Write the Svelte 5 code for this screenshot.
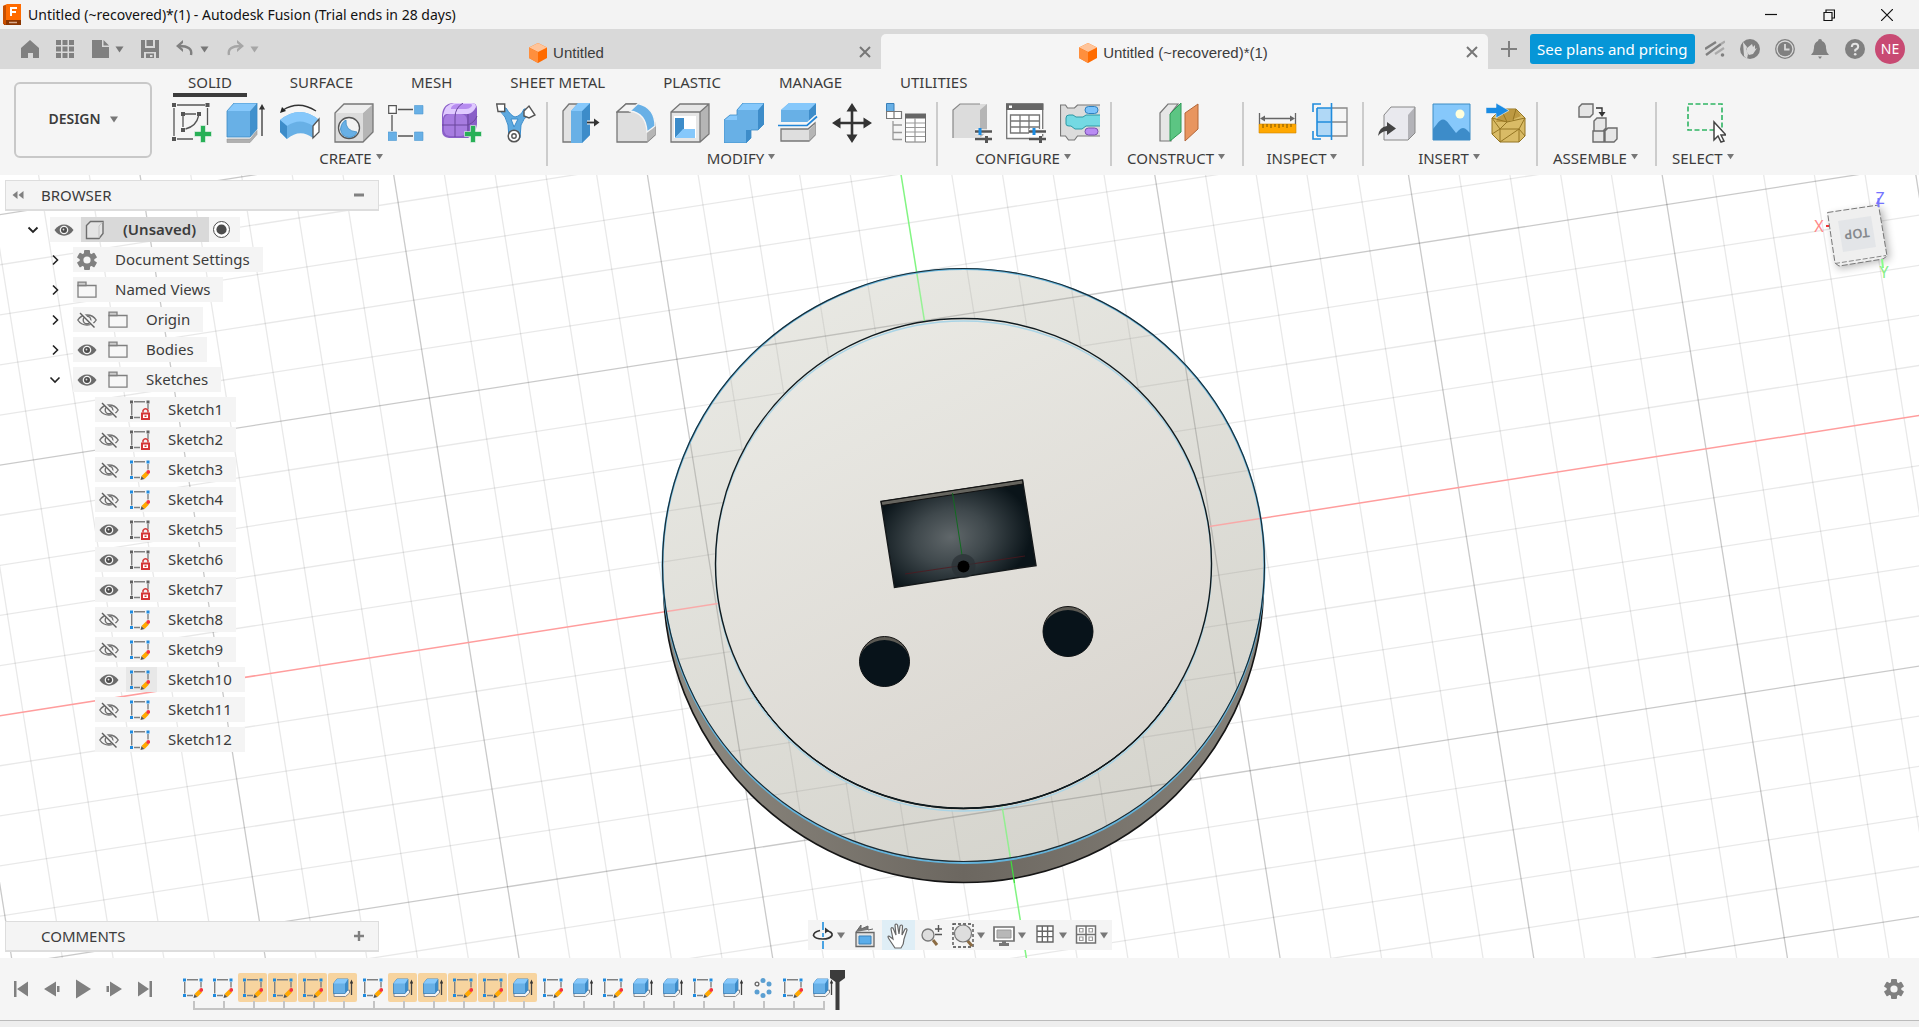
<script>
  const tabs = ['SOLID', 'SURFACE', 'MESH', 'SHEET METAL', 'PLASTIC', 'MANAGE', 'UTILITIES'];

  const groups = [
    { label: 'CREATE', tools: ['sketch', 'extrude', 'revolve', 'hole', 'pattern', 'form', 'pipe'] },
    { label: 'MODIFY', tools: ['presspull', 'fillet', 'shell', 'combine', 'split', 'move', 'parameters'] },
    { label: 'CONFIGURE', tools: ['configure', 'configtable', 'rules'] },
    { label: 'CONSTRUCT', tools: ['plane'] },
    { label: 'INSPECT', tools: ['measure', 'section'] },
    { label: 'INSERT', tools: ['derive', 'decal', 'mesh'] },
    { label: 'ASSEMBLE', tools: ['joint'] },
    { label: 'SELECT', tools: ['select'] }
  ];

  const folders = [
    { name: 'Document Settings', icon: 'gear' },
    { name: 'Named Views', icon: 'folder' },
    { name: 'Origin', icon: 'folder', eye: 'off' },
    { name: 'Bodies', icon: 'folder', eye: 'on' },
    { name: 'Sketches', icon: 'folder', eye: 'on', open: true }
  ];

  const locked = [1, 2, 5, 6, 7];
  const shown = [5, 6, 7, 10];
  const sketches = Array.from({ length: 12 }, (_, i) => ({
    name: `Sketch${i + 1}`,
    icon: locked.includes(i + 1) ? 'sketchlock' : 'sketchedit',
    eye: shown.includes(i + 1) ? 'on' : 'off',
    current: i + 1 === 10
  }));

  const features = [...'ssssseseesseseseesepse'].map((kind, i) => ({
    kind,
    marked: (i > 1 && i < 6) || (i > 6 && i < 12)
  }));
  const featureNames = { s: 'Sketch', e: 'Extrude', p: 'Circular pattern' };

  const playback = ['first', 'back', 'play', 'forward', 'last'];

  const navTools = [
    { icon: 'orbit', menu: true },
    { icon: 'look' },
    { icon: 'pan', active: true },
    { icon: 'zoom' },
    { icon: 'fit', menu: true },
    { icon: 'display', menu: true },
    { icon: 'grid', menu: true },
    { icon: 'views', menu: true }
  ];

  const gridSteps = Array.from({ length: 61 }, (_, i) => i - 30).filter((n) => n !== 0);
</script>

{#snippet caret()}
  <svg class="caret" viewBox="0 0 8 7" aria-hidden="true"><path d="M0 0.5h8L4 6.5z" fill="currentColor" /></svg>
{/snippet}

{#snippet cross()}
  <svg class="i12" viewBox="0 0 12 12" aria-hidden="true"><path d="M1 1l10 10M11 1L1 11" stroke="currentColor" stroke-width="2" fill="none" /></svg>
{/snippet}

{#snippet cube()}
  <svg class="cube" viewBox="0 0 18 20" aria-hidden="true">
    <path d="M9 0l9 4.500v10.500L9 20 0 15V4.500z" fill="#ff6b00" />
    <path d="M9 0l9 4.500L9 9 0 4.500z" fill="#ffc49a" />
    <path d="M0 4.500L9 9v11L0 15z" fill="#ff8f3d" />
  </svg>
{/snippet}

{#snippet plus()}
  <path d="M28.500 22.500h5v6h6v5h-6v6h-5v-6h-6v-5h6z" fill="#28b057" stroke="#f5f5f5" stroke-width=".6" />
{/snippet}

{#snippet gear()}
  <g fill="#808080">
    {#each [0, 60, 120] as angle}
      <rect x="7" y="0" width="6" height="20" rx="1" transform="rotate({angle} 10 10)" />
    {/each}
    <circle cx="10" cy="10" r="7.400" />
  </g>
  <circle cx="10" cy="10" r="3.600" fill="#f5f5f5" />
{/snippet}

{#snippet eye(state)}
  <svg class="i20" viewBox="0 0 20 20" aria-hidden="true">
    {#if state === 'on'}
      <path d="M0.500 10C5 2.500 15 2.500 19.500 10 15 17.500 5 17.500 0.500 10z" fill="#6b6b6b" />
      <circle cx="10" cy="10" r="4.300" fill="#f5f5f5" />
      <circle cx="10" cy="10" r="3" fill="#4c4c4c" />
      <circle cx="9.500" cy="9.500" r="0.900" fill="#ddd" />
    {:else}
      <path d="M0.800 10C5 3.300 15 3.300 19.200 10 15 16.700 5 16.700 0.800 10z" fill="none" stroke="#707070" stroke-width="1.400" />
      <circle cx="10" cy="10" r="3.800" fill="none" stroke="#707070" stroke-width="1.400" />
      <path d="M4 2.500l14 14.500" stroke="#f5f5f5" stroke-width="3" />
      <path d="M3 3l14.500 14.500" stroke="#606060" stroke-width="1.400" />
    {/if}
  </svg>
{/snippet}

{#snippet small(name)}
  <svg class="i20" viewBox="0 0 20 20" aria-hidden="true">
    {#if name === 'gear'}
      {@render gear()}
    {:else if name === 'folder'}
      <path d="M1 5.500h18v11.700H1z" fill="#f7f7f7" stroke="#808080" stroke-width="1.300" />
      <path d="M1 2.200h8v3.300H1z" fill="#ccc" stroke="#808080" stroke-width="1.300" />
    {:else if name === 'body'}
      <path d="M5.500 1.500H18v12l-4 5H1.500v-13z" fill="#e4e4e4" stroke="#6e6e6e" stroke-width="1.400" />
      <path d="M14 6l3.500-4M14 6v12" stroke="#c4c4c4" fill="none" />
    {:else if name === 'extrude'}
      <path d="M1 15v3.500h11.500l4-3.500v-3z" fill="#f3f3f3" stroke="#8a8a8a" />
      <path d="M0.500 5.500L4 1h11v10.500L12 15.500H0.500z" fill="#68b0e6" stroke="#387fb8" stroke-width=".8" />
      <path d="M12 5.500L15 1v10.500l-3 4z" fill="#3d8cc9" />
      <path d="M0.500 5.500L4 1h11l-3 4.500z" fill="#86c8fb" />
      <path d="M18.500 17V4" stroke="#444" stroke-width="1.300" />
      <path d="M16.800 5.500L18.500 1.500l1.700 4z" fill="#333" />
    {:else if name === 'circpattern'}
      <g fill="#5b9fd2">
        <circle cx="10" cy="2.500" r="2.500" /><circle cx="16" cy="6" r="2.500" /><circle cx="16" cy="14" r="2.500" />
        <circle cx="10" cy="17.500" r="2.500" /><circle cx="4" cy="14" r="2.500" />
      </g>
      <circle cx="4" cy="6" r="1.900" fill="#f5f5f5" stroke="#666" stroke-width="1.300" />
    {:else}
      <path d="M4 1.700h11M1.700 4v11.500M18 4v5.500M4 17.500h6" stroke="#808080" stroke-width="1.400" fill="none" />
      <g fill={name === 'sketchlock' ? '#606060' : '#1e8be0'}>
        <path d="M0 0.500h3v3H0zM16.500 0.500h3v3h-3zM0 16h3v3H0z" />
      </g>
      {#if name === 'sketchlock'}
        <path d="M11 12.500h9v7.500h-9z" fill="#d43434" />
        <path d="M13 12.500v-2q2.500-3.500 5 0v2" fill="none" stroke="#d43434" stroke-width="1.500" />
        <path d="M13 14.500h5v3.500h-5z" fill="#fff" /><path d="M14.500 15.500h2v1.500h-2z" fill="#d43434" />
      {:else}
        <path d="M10.500 20l1-4 3 3z" fill="#555" />
        <path d="M11.500 16l4.500-4.500 3 3-4.500 4.500z" fill="#ffa800" />
        <circle cx="18.200" cy="12" r="1.900" fill="#f5353f" />
      {/if}
    {/if}
  </svg>
{/snippet}

{#snippet toolIcon(name)}
  <svg class="i40" viewBox="0 0 40 40" aria-hidden="true">
    {#if name === 'sketch'}
      <path d="M5 2h28M2 5v28M35.500 5v17M5 36h16" fill="none" stroke="#555" stroke-width="1.300" />
      <path d="M13 11h11M11 13v11M26.500 13q-2 10-13 13" fill="none" stroke="#555" stroke-width="1.300" />
      <path d="M0 0h4v4H0zM33.500 0h4v4h-4zM0 34h4v4H0zM9 9h4v4H9zM25 9h4v4h-4zM9 25h4v4H9z" fill="#555" />
      {@render plus()}
    {:else if name === 'extrude'}
      <path d="M1 36v3.500h23l7-8v-4l-7 8.500z" fill="#b0b0b0" stroke="#999" stroke-width=".6" />
      <path d="M1 8h23v26H1z" fill="#68b0e6" />
      <path d="M1 8l7-8h23l-7 8z" fill="#86c8fb" />
      <path d="M24 8l7-8v26l-7 8z" fill="#4191cd" />
      <path d="M1 8l7-8h23v26l-7 8H1z" fill="none" stroke="#3d8cc4" stroke-width=".8" />
      <path d="M36 33V4" stroke="#333" stroke-width="1.300" /><path d="M33 6.500l3-5.500 3 5.500z" fill="#333" />
    {:else if name === 'revolve'}
      <path d="M0 17Q20 1 39 17l-6 18q-13-10-26 1L0 29z" fill="#68b0e6" />
      <path d="M0 17Q20 1 39 17l-6 6Q20 14 7 23z" fill="#86c8fb" />
      <path d="M0 17l7 6v13l-7-7z" fill="#3d8cc9" />
      <path d="M33 23l6-7v13l-6 6z" fill="#fff" stroke="#555" stroke-width="1.300" />
      <path d="M3 7q16-10 33 1" fill="none" stroke="#333" stroke-width="1.300" /><path d="M0 10l2-6 4 4z" fill="#222" />
    {:else if name === 'hole'}
      <path d="M1 10L10 1h29v28L29 39H1z" fill="#dcdcdc" />
      <path d="M29 10L39 1v28L29 39z" fill="#b5b5b5" /><path d="M1 10l9-9h29l-10 9z" fill="#eee" />
      <path d="M1 10L10 1h29v28L29 39H1z" fill="none" stroke="#777" stroke-width="1.300" />
      <circle cx="15" cy="25" r="10.500" fill="#f2f2f2" stroke="#555" stroke-width="1.300" />
      <path d="M12 17q-1 11 11 12-2 5-8 5.500-8-1-8.500-8.500 1-7 5.500-9z" fill="#68b0e6" stroke="#3a8ac5" stroke-width=".8" />
    {:else if name === 'pattern'}
      <path d="M10 6.500h15M4 12v16M10 33h15" stroke="#555" stroke-width="1.300" fill="none" />
      <path d="M0.700 2.700h7.600v7.600H0.700z" fill="#fff" stroke="#555" stroke-width="1.200" />
      <path d="M26.500 2.500h8.500v8.500h-8.500zM0 29h8.500v8.500H0zM26.500 29h8.500v8.500h-8.500z" fill="#68b0e6" stroke="#4d98d0" stroke-width=".6" />
    {:else if name === 'form'}
      <path d="M0 12Q1 0 12 0h18q5 0 5 6v15q-1 10-9 14H7q-7-1-7-7z" fill="#8a5fc8" />
      <path d="M1 12Q3 1 12 0h18q4 0 4 4-3 6-8 7H5q-3 0-4 4z" fill="#e0caff" />
      <path d="M9 5q2-4 6-4h14q2 1 0 3-2 2-5 2H9z" fill="#b78df0" />
      <rect x="2" y="11" width="23" height="22" rx="6" fill="#a77ce0" />
      <path d="M13 34V14q0-9 8-14M0 22h26q7-3 9-9M26 11v22" fill="none" stroke="#6a479c" />
      {@render plus()}
    {:else if name === 'pipe'}
      <path d="M4 5h6q5 8 9 9 6-1 9-8h5v5q-6 5-8 11l-1 13H13l-1-13Q10 13 4 8z" fill="#5ea9df" stroke="#3a8ccb" />
      <path d="M15 16h7l-4 8z" fill="#f5f5f5" stroke="#3a8ccb" />
      <path d="M0.700 1h8v7.500H2z" fill="#fff" stroke="#555" stroke-width="1.400" />
      <path d="M28 8l5-5 6 9-6 3-5-2z" fill="#fff" stroke="#555" stroke-width="1.400" />
      <circle cx="18" cy="33" r="5.800" fill="#fff" stroke="#555" stroke-width="1.500" /><circle cx="18" cy="33" r="2.200" fill="#fff" stroke="#555" stroke-width="1.400" />
    {:else if name === 'presspull'}
      <path d="M1 8l6-7h9l-6 8v30H1z" fill="#e2e2e2" stroke="#777" stroke-width="1.300" />
      <path d="M9 8l7-8h12v32l-8 8H9z" fill="#68b0e6" /><path d="M20 8l8-8v32l-8 8z" fill="#3d8cc9" />
      <path d="M9 8l7-8h12l-8 8z" fill="#86c8fb" />
      <path d="M25 19.500h9" stroke="#f5f5f5" stroke-width="4" />
      <path d="M25 19.500h9" stroke="#333" stroke-width="1.800" /><path d="M32 15.500l5.500 4-5.500 4z" fill="#333" />
    {:else if name === 'fillet'}
      <path d="M1 9l9-8h12q16 6 17 22v9l-8 7H1z" fill="#dedede" stroke="#777" stroke-width="1.300" />
      <path d="M31 29l8-5v8l-8 7z" fill="#b5b5b5" />
      <path d="M1 9l9-8h12l-8 8z" fill="#f3f3f3" stroke="#777" stroke-width="1.300" />
      <path d="M14 8l8-7.500q17 4 17 22.500l-8 6q-1-19-17-21z" fill="#68b0e6" stroke="#f5f5f5" stroke-width="1.300" />
    {:else if name === 'shell'}
      <path d="M1 9L10 1h29v30l-9 8H1z" fill="#e6e6e6" /><path d="M30 9l9-8v30l-9 8z" fill="#b5b5b5" />
      <path d="M1 9L10 1h29v30l-9 8H1zM1 9h29v30M30 9l9-8" fill="none" stroke="#777" stroke-width="1.300" />
      <path d="M4 13h22v22H4z" fill="#fff" /><path d="M5 15h9v11l-9 9z" fill="#3d8cc9" />
      <path d="M5 35l8-9h12v9z" fill="#86c8fb" />
    {:else if name === 'combine'}
      <path d="M0 17l6-5h7V7l6-7h21v21l-6 6h-7v8l-5 5H0z" fill="#68b0e6" />
      <path d="M34 7l6-7v21l-6 6zM22 27h5v8l-5 5z" fill="#3d8cc9" />
      <path d="M13 7l6-7h21l-6 7zM0 17l6-5h7v5z" fill="#86c8fb" />
      <path d="M0 17l6-5h7V7l6-7h21v21l-6 6h-7v8l-5 5H0z" fill="none" stroke="#3e8dc8" stroke-width=".8" />
    {:else if name === 'split'}
      <path d="M3 7l8-7h27l-5 7v12H3z" fill="#68b0e6" /><path d="M31 7l7-7v12l-7 7z" fill="#3d8cc9" />
      <path d="M3 7l8-7h27l-7 7z" fill="#86c8fb" />
      <path d="M0 22.500h29l10-9" fill="none" stroke="#f5f5f5" stroke-width="5" />
      <path d="M3 26h27l7-6v12l-6 6H3z" fill="#dedede" stroke="#777" stroke-width="1.300" /><path d="M31 27l6-6v11l-6 6z" fill="#b5b5b5" />
      <path d="M0 22.500h29l10-9" fill="none" stroke="#2286d8" stroke-width="1.700" />
    {:else if name === 'move'}
      <path d="M20 5v30M5 20h30" stroke="#333" stroke-width="2.600" />
      <path d="M14.500 8.500L20 0l5.500 8.500zM14.500 31.500L20 40l5.500-8.500zM8.500 14.500L0 20l8.500 5.500zM31.500 14.500L40 20l-8.500 5.500z" fill="#333" />
    {:else if name === 'parameters'}
      <path d="M0.500 0.500h7.500v8H0.500z" fill="#68b0e6" stroke="#387fb8" /><path d="M0.500 8.500H8v7H0.500zM8 8.500h7.500v7H8z" fill="#fff" stroke="#777" stroke-width="1.200" />
      <path d="M7 18v19M7 22h9M7 29.500h9M7 36.500h9" stroke="#999" stroke-width="1.300" />
      <path d="M19.500 12h20v27h-20z" fill="#fff" stroke="#777" /><path d="M19 10.500h21v5H19z" fill="#666" />
      <path d="M20 20h19M20 24.500h19M20 29h19M20 33.500h19M29 15v24" stroke="#999" stroke-width="1.200" />
    {:else if name === 'configure'}
      <path d="M1 7l7-6h27v27l-7 7H1z" fill="#dcdcdc" /><path d="M28 7l7-6v27l-7 7z" fill="#b5b5b5" />
      <path d="M1 35V7l7-6h20" fill="none" stroke="#888" stroke-width="1.200" />
      <path d="M23 28.500h17M23 36h17" stroke="#f5f5f5" stroke-width="4.500" />
      <path d="M23 28.500h17M23 36h17" stroke="#555" stroke-width="2.300" /><path d="M28 25v7" stroke="#1a8be3" stroke-width="3" /><path d="M34.500 33v7" stroke="#555" stroke-width="3" />
    {:else if name === 'configtable'}
      <path d="M0.700 1h36v34.500H0.700z" fill="#fff" stroke="#777" stroke-width="1.300" /><path d="M0 0.500h37.400v6.500H0z" fill="#666" /><path d="M3 2.500h3v2.500H3z" fill="#fff" />
      <path d="M4.500 12h29v18h-29zM4.500 18h29M4.500 24h29M14 12v18M23 12v18" fill="none" stroke="#777" stroke-width="1.300" />
      <path d="M23 28.500h17M23 36h17" stroke="#f5f5f5" stroke-width="5" />
      <path d="M23 28.500h17M23 36h17" stroke="#555" stroke-width="2.300" /><path d="M28 25v7" stroke="#1a8be3" stroke-width="3" /><path d="M34.500 33v7" stroke="#555" stroke-width="3" />
    {:else if name === 'rules'}
      <path d="M0.500 2h5l2 3h7l3-3H40v31H17.500l-3 4h-6l-3-4h-5z" fill="#dcdcdc" />
      <path d="M40 2H17.500l-3 3h-7l-2-3h-5v31h5l3 4h6l3-4H40" fill="none" stroke="#777" stroke-width="1.200" />
      <rect x="25" y="3.500" width="13" height="7" rx="3.500" fill="#7cc3fb" stroke="#2d80be" />
      <path d="M40 12H26l-3 2h-7l-3-2H9q-3 0-3 3v6q0 2 3 2h2l4 3h7l4-3h14z" fill="#74d9e3" />
      <path d="M40 12H26l-3 2h-7l-3-2H9q-3 0-3 3v6q0 2 3 2h2l4 3h7l4-3h14" fill="none" stroke="#2d98a4" />
      <rect x="25" y="25" width="13" height="7" rx="3.500" fill="#b98bf3" stroke="#7a50b0" />
    {:else if name === 'plane'}
      <path d="M1 10l8-9h10l-7 9v28H1z" fill="#e6e6e6" stroke="#777" stroke-width="1.200" />
      <path d="M11 38V11L22 0v29z" fill="#5cc583" stroke="#2e9a56" /><path d="M26 38V10L39 1v25z" fill="#e8955f" stroke="#b36639" />
    {:else if name === 'measure'}
      <path d="M1 21h37v9H1z" fill="#ffa800" stroke="#cc8400" stroke-width=".6" />
      <path d="M5 21v4M9 21v3M13 21v4M17 21v3M21 21v4M25 21v3M29 21v4M33 21v3" stroke="#7b5200" />
      <path d="M1.500 10v11M37.500 10v11M5 15.500h29" stroke="#666" stroke-width="1.300" /><path d="M2 15.500l5-3v6zM37 15.500l-5-3v6z" fill="#666" />
    {:else if name === 'section'}
      <path d="M5 5h14v28H5z" fill="#b0d8f6" />
      <path d="M20 5h15v28H20M20 19h15" fill="none" stroke="#888" stroke-width="1.300" />
      <path d="M5 5h14M5 19h14M5 33h14M5 5v28M19.500 0v37M9 1H1v8M9 36H1v-8" fill="none" stroke="#218cdc" stroke-width="1.600" />
    {:else if name === 'derive'}
      <path d="M6 12l7-8h24v26l-7 7H6z" fill="#e9e9ee" /><path d="M30 12l7-8v26l-7 7z" fill="#b3b3b8" />
      <path d="M6 12l7-8h24v26l-7 7H6z" fill="none" stroke="#888" />
      <path d="M0 33q1-9 9-10v-4l9 6.500-9 6.500v-4q-5 0-9 5z" fill="#444" />
    {:else if name === 'decal'}
      <path d="M1 1h37v36H1z" fill="#86c8fb" stroke="#3d8cc4" />
      <circle cx="28" cy="11" r="4.500" fill="#ffffdb" /><path d="M1 26l4-5q6-9 12 0l7 9 3-3q4-4 8 0l3 3v7H1z" fill="#3d8cc9" />
    {:else if name === 'mesh'}
      <path d="M6 15l9-9h15l9 9v18l-6 6H14l-8-8z" fill="#d9bb66" stroke="#947523" />
      <path d="M15 6h15l5 7-14 6H10z" fill="#b5913a" opacity=".8" />
      <path d="M15 6l6 13 18-4M21 19L6 15l8 11 19 0 6-11M14 26l-8 5M14 26v13l19-13 6 7M33 26v13M21 19l-7 7M30 6l-3 11" fill="none" stroke="#947523" />
      <path d="M0 4.500h10V0l13 7.500L10 15v-4.500H0z" fill="#1a8be3" stroke="#f5f5f5" stroke-width=".6" />
    {:else if name === 'joint'}
      <g fill="#e6e6e6" stroke="#6b6b6b" stroke-width="1.400">
        <path d="M1 4l3-3h11v10l-3 3H1zM16 18l3-3h9v10l-3 3h-9zM15 28h11v11H15zM27 28l3-3h9v11l-3 3h-9z" />
      </g>
      <path d="M18 5h6v5" stroke="#333" fill="none" stroke-width="1.400" /><path d="M20.500 9h7L24 14z" fill="#333" />
    {:else if name === 'select'}
      <path d="M2 1h34v26H2z" fill="none" stroke="#2fb563" stroke-width="1.600" stroke-dasharray="5 2.500" />
      <path d="M28 19v18l4-4 3 6 3-1-3-6h5z" fill="#fff" stroke="#444" stroke-width="1.500" />
    {/if}
  </svg>
{/snippet}

{#snippet navIcon(name)}
  <svg class="i22" viewBox="0 0 22 28" aria-hidden="true">
    {#if name === 'orbit'}
      <path d="M11 1v8M11 12v4M11 20v8" stroke="#389be0" stroke-width="1.800" />
      <path d="M14 9.500q7 1.500 6 5-2 3.500-9.500 3.500T1.500 14.500q0-3.500 6.500-5" fill="none" stroke="#333" stroke-width="1.700" /><path d="M13 12.500v-6l4 3z" fill="#333" />
    {:else if name === 'look'}
      <path d="M2 11.500h18v14H2z" fill="#e4e4e4" stroke="#666" stroke-width="1.300" /><path d="M5 15h12v8H5z" fill="#5badea" stroke="#3b82b9" />
      <path d="M2 11L7 4v4l7-3v4l5-1" fill="#777" stroke="#666" />
    {:else if name === 'pan'}
      <path d="M8 27l-6-9q-2-3 0-3l4 3L4 8q0-2 2-1l3 7L8 4q1-2 2.500 0l1.500 9 1-8q1.500-2 2.500 0l-.5 9 3-6q2-1 2 1l-3 9q0 5-3 9z" fill="#fff" stroke="#666" stroke-width="1.200" />
    {:else if name === 'zoom'}
      <path d="M13 19l4 5" stroke="#8b6b42" stroke-width="3" /><circle cx="8" cy="14" r="6" fill="#ddd" stroke="#777" stroke-width="1.300" />
      <path d="M15 8h7M18.500 4v7M15 13.500h7" stroke="#555" stroke-width="1.400" />
    {:else if name === 'fit'}
      <path d="M1 3h20v23H1z" fill="none" stroke="#444" stroke-width="1.300" stroke-dasharray="3 2" /><path d="M15 19l5 6" stroke="#8b6b42" stroke-width="3" />
      <circle cx="11" cy="12.500" r="8.500" fill="#ddd" stroke="#777" stroke-width="1.200" />
    {:else if name === 'display'}
      <path d="M1 6h20v14H1z" fill="#fff" stroke="#707070" stroke-width="1.700" /><path d="M4 9h14v8H4z" fill="#b8b8b8" stroke="#999" /><path d="M9 20h4v2h3v3H6v-3h3z" fill="#777" />
    {:else if name === 'grid'}
      <path d="M3 5h16v16H3zM3 10.300h16M3 15.600h16M8.300 5v16M13.600 5v16" fill="#fff" stroke="#666" stroke-width="1.400" />
    {:else if name === 'views'}
      <path d="M1.500 5h19v17h-19zM11 5v17M1.500 13.500h19" fill="#fff" stroke="#707070" stroke-width="1.500" />
      <path d="M4.500 7.500H8v3.500H4.500zM14 7.500h3.500v3.500H14zM4.500 16H8v3.500H4.500zM14 16h3.500v3.500H14z" fill="none" stroke="#999" stroke-width="1.200" />
    {/if}
  </svg>
{/snippet}

{#snippet gridLines()}
  <g transform="matrix(49.500 -7.740 7.820 48.880 963.500 565)">
    {#each gridSteps as n}
      <line class={n % 5 ? 'minor' : 'major'} x1={n} y1="-32" x2={n} y2="32" />
      <line class={n % 5 ? 'minor' : 'major'} x1="-32" y1={n} x2="32" y2={n} />
    {/each}
    <line class="axis-x" x1="-32" y1="0" x2="32" y2="0" />
    <line class="axis-y" x1="0" y1="-32" x2="0" y2="32" />
  </g>
{/snippet}

<div class="app">
  <header class="titlebar">
    <svg class="logo" viewBox="0 0 18 22" aria-hidden="true">
      <path d="M0 2l4-2h14v17H0z" fill="#ff6b00" /><path d="M1 16h17v5H1z" fill="#8a3500" /><path d="M0 2l3-1v20l-3-1z" fill="#c74f00" />
      <path d="M8 12V4h6M8 8h5" stroke="#fff" stroke-width="2" fill="none" /><path d="M6 18.500h8" stroke="#d9a98a" stroke-width="1.500" />
    </svg>
    <h1>Untitled (~recovered)*(1) - Autodesk Fusion (Trial ends in 28 days)</h1>
    <div class="window-buttons">
      <button aria-label="Minimize"><svg class="i12" viewBox="0 0 12 12"><path d="M0 5.500h12" stroke="#111" stroke-width="1.200" /></svg></button>
      <button aria-label="Restore"><svg class="i12" viewBox="0 0 12 12"><path d="M1 3.500h8v8H1zM3 3V1h8.500v8H9.500" fill="none" stroke="#111" stroke-width="1.200" /></svg></button>
      <button aria-label="Close"><svg class="i12" viewBox="0 0 12 12"><path d="M0 0l12 12M12 0L0 12" stroke="#111" stroke-width="1.200" /></svg></button>
    </div>
  </header>

  <div class="docbar">
    <div class="quick">
      <button aria-label="Home"><svg class="i18" viewBox="0 0 18 18"><path d="M9 0l9 8v10h-6v-5H7v5H0V8z" fill="#808080" /></svg></button>
      <button aria-label="Data panel"><svg class="i18" viewBox="0 0 18 18"><path d="M0 0h5v5H0zM6.500 0h5v5h-5zM13 0h5v5h-5zM0 6.500h5v5H0zM6.500 6.500h5v5h-5zM13 6.500h5v5h-5zM0 13h5v5H0zM6.500 13h5v5h-5zM13 13h5v5h-5z" fill="#808080" /></svg></button>
      <button class="menu" aria-label="File"><svg class="i18" viewBox="0 0 18 18"><path d="M1 0h10v7h7v11H1z" fill="#808080" /><path d="M12.500 0L18 5.500h-5.500z" fill="#808080" /></svg>{@render caret()}</button>
      <button aria-label="Save"><svg class="i18" viewBox="0 0 18 18"><path d="M0 0h4v8h10V0h4v18h-3v-6H3v6H0zM5.500 0H12v6H5.500zM5 13.500h8V18H5z" fill="#808080" /><path d="M9 15h2.500v2H9z" fill="#d9d9d9" /></svg></button>
      <button class="menu" aria-label="Undo"><svg class="i18" viewBox="0 0 18 18"><path d="M15 15q2-9-12-9" fill="none" stroke="#808080" stroke-width="2.400" /><path d="M7 0v3L3.500 6 7 9v3L0 6z" fill="#808080" /></svg>{@render caret()}</button>
      <button class="menu faded" aria-label="Redo"><svg class="i18" viewBox="0 0 18 18"><path d="M3 15q-2-9 12-9" fill="none" stroke="#a6a6a6" stroke-width="2.400" /><path d="M11 0v3l3.500 3L11 9v3l7-6z" fill="#a6a6a6" /></svg>{@render caret()}</button>
    </div>
    <nav class="docs" aria-label="Open documents">
      <div class="doc"><a href="#untitled">{@render cube()}Untitled</a><button aria-label="Close Untitled">{@render cross()}</button></div>
      <div class="doc active"><a href="#recovered">{@render cube()}Untitled (~recovered)*(1)</a><button aria-label="Close recovered document">{@render cross()}</button></div>
    </nav>
    <div class="account">
      <button class="new" aria-label="New document"><svg class="i16" viewBox="0 0 16 16"><path d="M8 0v16M0 8h16" stroke="#808080" stroke-width="2" /></svg></button>
      <button class="plans">See plans and pricing</button>
      <div class="status">
        <button aria-label="Extensions"><svg class="i20" viewBox="0 0 20 20"><path d="M0 10l11-7M1 16L16 5" stroke="#808080" stroke-width="2.400" /><path d="M16 5l4-2.500M10 15l9-6" stroke="#aaa" stroke-width="2.200" /><circle cx="17.500" cy="16" r="1.800" fill="#808080" /></svg></button>
        <button aria-label="Online status"><svg class="i20" viewBox="0 0 20 20"><circle cx="10" cy="10" r="10" fill="#808080" /><path d="M3 3l4 5-1 3 2 4-1 5-3-3z" fill="#d9d9d9" /><path d="M7 9l5-4 1 3 2-2v4l2-1-4 6-4 1-3-4z" fill="#d9d9d9" /></svg></button>
        <button aria-label="Job status"><svg class="i20" viewBox="0 0 20 20"><circle cx="10" cy="10" r="9.300" fill="none" stroke="#808080" stroke-width="1.300" /><circle cx="10" cy="10" r="7.300" fill="#808080" /><path d="M10 5v5.500h4.500" fill="none" stroke="#d9d9d9" stroke-width="1.800" /></svg></button>
        <button aria-label="Notifications"><svg class="i20" viewBox="0 0 20 20"><path d="M10 0q2 0 2 2 4 1.500 4 7 0 4 3 7H1q3-3 3-7 0-5.500 4-7 0-2 2-2zM8 17.500h4L10 20z" fill="#808080" /></svg></button>
        <button aria-label="Help"><svg class="i20" viewBox="0 0 20 20"><circle cx="10" cy="10" r="10" fill="#808080" /><path d="M6.800 8q0-3.300 3.400-3.300 3 0 3 2.800 0 2-3 3.500V12.500" fill="none" stroke="#e3e3e3" stroke-width="2" /><circle cx="10.200" cy="15.300" r="1.300" fill="#e3e3e3" /></svg></button>
      </div>
      <button class="avatar" aria-label="Account">NE</button>
    </div>
  </div>

  <section class="ribbon" aria-label="Toolbar">
    <button class="workspace">DESIGN {@render caret()}</button>
    <div class="panel">
      <nav class="tabs" aria-label="Toolbar tabs">
        {#each tabs as tab, i}<button class:chosen={i === 0}>{tab}</button>{/each}
      </nav>
      <div class="groups">
        {#each groups as group}
          <div class="group">
            <div class="tools">
              {#each group.tools as tool}<button aria-label={tool}>{@render toolIcon(tool)}</button>{/each}
            </div>
            <button class="group-label">{group.label}{@render caret()}</button>
          </div>
        {/each}
      </div>
    </div>
  </section>

  <main class="viewport">
    <svg class="scene" viewBox="0 175 1919 783" preserveAspectRatio="xMidYMid slice" role="img" aria-label="Round plate with one rectangular and two circular pockets">
      <defs>
        <linearGradient id="face" x1="0.200" y1="0" x2="0.700" y2="1"><stop offset="0" stop-color="#eaeae5" /><stop offset="1" stop-color="#d9d5cf" /></linearGradient>
        <linearGradient id="rim" x1="0.200" y1="0" x2="0.700" y2="1"><stop offset="0" stop-color="#e9e9e4" /><stop offset="1" stop-color="#d5d4cd" /></linearGradient>
        <linearGradient id="side" x1="0" y1="0" x2="1" y2="0"><stop offset="0" stop-color="#8f8b82" /><stop offset="0.500" stop-color="#6c6760" /><stop offset="1" stop-color="#86827a" /></linearGradient>
        <radialGradient id="pocket" gradientUnits="userSpaceOnUse" cx="0" cy="0" r="1" gradientTransform="matrix(80 -13 9 60 951 537)"><stop offset="0" stop-color="#60676a" /><stop offset="0.450" stop-color="#3f484c" /><stop offset="1" stop-color="#0a1419" /></radialGradient>
        <clipPath id="rim-clip"><ellipse cx="963.500" cy="565" rx="301" ry="296.500" /></clipPath>
      </defs>
      {@render gridLines()}
      <ellipse cx="963.500" cy="584" rx="300" ry="298.500" fill="url(#side)" stroke="#151515" stroke-width="1.600" />
      <ellipse cx="963.500" cy="565" rx="301" ry="296.500" fill="url(#rim)" />
      <g class="through" clip-path="url(#rim-clip)">{@render gridLines()}</g>
      <path d="M1011 861l3.500 22" stroke="#3fe03f" stroke-width="1.200" />
      <ellipse cx="963.500" cy="566" rx="301" ry="297" fill="none" stroke="#64b4dc" stroke-width="2" />
      <ellipse cx="963.500" cy="565" rx="301" ry="296.500" fill="none" stroke="#182b35" stroke-width="1.200" />
      <ellipse cx="963.500" cy="564" rx="248" ry="245.500" fill="url(#face)" />
      <ellipse cx="963.500" cy="566" rx="248" ry="245" fill="none" stroke="#a9d4e6" stroke-width="1.400" />
      <ellipse cx="963.500" cy="563.500" rx="248" ry="245" fill="none" stroke="#101a1e" stroke-width="1.400" />
      <path d="M751 690A248 245 0 0 0 1176 690A248 243.500 0 0 1 751 690z" fill="#101a1e" stroke="#101a1e" />
      <path d="M881 501.500L1022.500 480l13.500 85.500-141.500 22z" fill="url(#pocket)" stroke="#15191b" stroke-width="1.500" />
      <path d="M881 501.500L1022.500 480l.5 4L882 505.500z" fill="#66655f" stroke="#111" />
      <path d="M952.500 493L962 555" stroke="#126b20" /><path d="M905 574l120-18" stroke="#56151c" opacity=".7" />
      <circle cx="963.500" cy="566" r="12" fill="#293035" opacity=".7" /><circle cx="963.500" cy="566.500" r="6" fill="#000" />
      {#each [[884.5, 661.5], [1068, 631.5]] as [x, y]}
        <circle cx={x} cy={y} r="25" fill="#5c5a54" stroke="#111" />
        <path d="M{x - 25} {y}a25 21.500 0 0 1 50 0a25 25 0 0 1-50 0z" fill="#08131a" />
      {/each}
    </svg>

    <svg class="viewcube" viewBox="1810 185 90 100" role="img" aria-label="View cube">
      <path d="M1831 216l51-8 8 51-52 10z" class="shadow" />
      <path d="M1827.500 212.500l51-7.500 8.500 51-4 3-44 7-4-3z" fill="#efefef" stroke="#777" stroke-dasharray="6 2" />
      <path d="M1838 221l33-5 5 31-33 5z" fill="#e3e5e8" />
      <path d="M1835 263.500l51-8" stroke="#888" stroke-dasharray="5 2" />
      <text x="0" y="5" transform="translate(1857 234) rotate(174)" class="top">TOP</text>
      <path d="M1826 226h3" stroke="#ee3333" stroke-width="2" /><path d="M1878.500 198v9" stroke="#7777ff" stroke-width="2" /><path d="M1882 259l1 9" stroke="#88ff88" stroke-width="2" />
      <text x="1819" y="232" class="x">X</text><text x="1880" y="204" class="z">Z</text><text x="1884" y="278" class="y">Y</text>
    </svg>

    <aside class="browser" aria-label="Browser">
      <div class="bar">
        <svg class="i12 collapse" viewBox="0 0 12 12" aria-hidden="true"><path d="M5.500 2v8L0.500 6zM11.500 2v8L6.500 6z" fill="#808080" /></svg>
        <h2>BROWSER</h2>
        <button aria-label="Hide browser"><svg class="i12" viewBox="0 0 12 12"><path d="M1 6h10" stroke="#808080" stroke-width="3" /></svg></button>
      </div>
      <ul class="tree">
        <li class="row root">
          <button class="chevron" aria-label="Collapse"><svg class="i12" viewBox="0 0 12 12"><path d="M1.500 3.500L6 8l4.500-4.500" fill="none" stroke="#222" stroke-width="1.800" /></svg></button>
          <div class="entry">
            <span class="cell">{@render eye('on')}</span>
            <span class="cell picked">{@render small('body')}</span>
            <label class="name picked" for="active-component">(Unsaved)</label>
            <span class="cell"><input id="active-component" type="radio" checked /></span>
          </div>
        </li>
        {#each folders as item}
          <li class="row">
            <button class="chevron" aria-label="Toggle {item.name}"><svg class="i12" viewBox="0 0 12 12"><path d={item.open ? 'M1.500 3.500L6 8l4.500-4.500' : 'M4 1.500L8.500 6 4 10.500'} fill="none" stroke="#222" stroke-width="1.600" /></svg></button>
            <div class="entry">
              {#if item.eye}<span class="cell">{@render eye(item.eye)}</span>{/if}
              <span class="cell">{@render small(item.icon)}</span>
              <span class="name">{item.name}</span>
            </div>
          </li>
        {/each}
        {#each sketches as item}
          <li class="row leaf">
            <div class="entry">
              <span class="cell">{@render eye(item.eye)}</span>
              <span class="cell" class:current={item.current}>{@render small(item.icon)}</span>
              <span class="name">{item.name}</span>
            </div>
          </li>
        {/each}
      </ul>
    </aside>

    <div class="bar comments">
      <h2>COMMENTS</h2>
      <button aria-label="Show comments"><svg class="i12" viewBox="0 0 12 12"><path d="M1 6h10M6 1v10" stroke="#808080" stroke-width="2.400" /></svg></button>
    </div>

    <div class="navbar" role="toolbar" aria-label="Navigation">
      {#each navTools as tool}
        <button class:active={tool.active} class:has-menu={tool.menu} aria-label={tool.icon}>
          {@render navIcon(tool.icon)}{#if tool.menu}{@render caret()}{/if}
        </button>
      {/each}
    </div>
  </main>

  <footer class="timeline">
    <div class="playback">
      {#each playback as action}
        <button aria-label={action}>
          <svg class="i20" viewBox="0 0 20 20" fill="#808080">
            {#if action === 'first'}<path d="M3 2h2.500v16H3zM6 10l11-7.500v15z" />
            {:else if action === 'back'}<path d="M2 10l12-7.500v15zM15 7h2.500v6H15z" />
            {:else if action === 'play'}<path d="M3 0.500L18 10 3 19.500z" />
            {:else if action === 'forward'}<path d="M18 10L6 2.500v15zM5 7H2.500v6H5z" />
            {:else}<path d="M17 2h-2.500v16H17zM14 10L3 2.500v15z" />{/if}
          </svg>
        </button>
      {/each}
    </div>
    <ol class="features">
      {#each features as feature}
        <li>
          <button class:marked={feature.marked} aria-label={featureNames[feature.kind]}>
            {@render small({ s: 'sketchedit', e: 'extrude', p: 'circpattern' }[feature.kind])}
          </button>
        </li>
      {/each}
      <li class="marker"><svg viewBox="0 0 15 40" aria-hidden="true"><path d="M0 0h15v8l-5.500 4v28h-4V12L0 8z" fill="#3c3c3c" /></svg></li>
    </ol>
    <button class="settings" aria-label="Timeline settings"><svg class="i20" viewBox="0 0 20 20">{@render gear()}</svg></button>
  </footer>
  <div class="edge"></div>
</div>

<style>
  :global(body) { margin: 0; }
  .app { display: flex; flex-direction: column; height: 100vh; overflow: hidden; background: #f5f5f5; color: #3c3c3c; font: 15px/20px "Noto Sans", sans-serif; }
  button { display: inline-flex; align-items: center; justify-content: center; padding: 0; border: 0; background: none; color: inherit; font: inherit; white-space: nowrap; cursor: pointer; }
  svg { display: block; flex: none; }
  h1, h2, ul, ol { margin: 0; padding: 0; font: inherit; list-style: none; }
  .i12 { width: 12px; height: 12px; }
  .i16 { width: 16px; height: 16px; }
  .i18 { width: 18px; height: 18px; }
  .i20 { width: 20px; height: 20px; }
  .i22 { width: 22px; height: 28px; }
  .i40 { width: 40px; height: 40px; }
  .caret { width: 8px; height: 7px; color: #777; }

  .titlebar { display: flex; align-items: center; gap: 7px; height: 29px; padding: 0 3px; background: #f3f3f3; color: #111; font-size: 14px; }
  .logo { width: 18px; height: 22px; }
  .window-buttons { display: flex; margin-left: auto; }
  .window-buttons button { width: 58px; height: 29px; }

  .docbar { display: flex; height: 40px; background: #d9d9d9; }
  .quick { display: flex; align-items: center; box-sizing: border-box; width: 274px; padding-left: 21px; gap: 17px; }
  .quick .menu { gap: 6px; }
  .quick .caret { width: 9px; height: 7px; }
  .quick .faded .caret { color: #a6a6a6; }
  .docs { display: flex; flex: 1; align-items: flex-end; min-width: 0; }
  .doc { display: flex; flex: 1; align-items: center; height: 35px; padding-right: 10px; border-radius: 5px 5px 0 0; color: #3c3c3c; font: 15px/20px "Liberation Sans", sans-serif; }
  .doc.active { background: #f5f5f5; }
  .doc a { display: flex; flex: 1; align-items: center; justify-content: center; gap: 6px; padding-top: 3px; color: inherit; text-decoration: none; }
  .doc button { color: #777; }
  .cube { width: 18px; height: 20px; }
  .account { display: flex; align-items: center; box-sizing: border-box; width: 431px; padding-right: 14px; }
  .new { width: 42px; height: 30px; }
  .plans { height: 30px; padding: 0 7px; border-radius: 3px; background: #0696d7; color: #fff; }
  .status { display: flex; flex: 1; justify-content: space-between; padding: 0 10px; }
  .avatar { width: 30px; height: 30px; border-radius: 50%; background: #c84a73; color: #fff; font-size: 14px; }

  .ribbon { display: flex; gap: 13px; height: 106px; padding-left: 14px; background: #f5f5f5; }
  .workspace { box-sizing: border-box; width: 138px; height: 76px; margin-top: 13px; padding-bottom: 2px; gap: 9px; border: 2px solid #c8c8c8; border-radius: 6px; font-weight: 600; font-size: 14px; }
  .panel { display: flex; flex-direction: column; }
  .tabs { display: flex; gap: 28px; height: 28px; padding-left: 8px; }
  .tabs button { padding: 2px 15px 0; border-bottom: 4px solid transparent; }
  .tabs .chosen { border-color: #3c3c3c; }
  .groups { display: flex; padding-top: 5px; }
  .group { display: flex; flex-direction: column; align-items: center; height: 64px; padding: 0 3px 0 7px; border-left: 2px solid #ccc; }
  .group:first-child { padding-left: 0; border: 0; }
  .tools { display: flex; }
  .tools button { width: 54px; height: 42px; }
  .group-label { height: 28px; margin-top: 4px; padding: 0 14px 0 8px; gap: 4px; }
  .group-label .caret { margin-bottom: 4px; width: 7px; }

  .viewport { position: relative; flex: 1; min-height: 0; overflow: hidden; background: #fff; }
  .scene { position: absolute; inset: 0; width: 100%; height: 100%; }
  .through { opacity: 0.8; }
  line { vector-effect: non-scaling-stroke; }
  .minor { stroke: #000; stroke-opacity: 0.09; stroke-width: 1.3px; }
  .major { stroke: #000; stroke-opacity: 0.21; stroke-width: 1.3px; }
  .axis-x { stroke: #ff9d9d; stroke-width: 1.5px; }
  .axis-y { stroke: #82f582; stroke-width: 1.5px; }
  .viewcube { position: absolute; top: 10px; right: 19px; width: 90px; height: 100px; font: 16px "Noto Sans", sans-serif; text-anchor: middle; }
  .shadow { fill: #000; opacity: 0.3; filter: blur(4px); }
  .top { fill: #85898e; font-size: 13px; font-weight: 600; }
  .x { fill: #ff8888; }
  .y { fill: #88ee88; }
  .z { fill: #7474ff; }

  .browser { position: absolute; top: 5px; left: 5px; width: 374px; }
  .bar { display: flex; align-items: center; box-sizing: border-box; height: 31px; padding: 0 13px 0 6px; border: 1px solid #ddd; border-bottom-width: 2px; background: #f4f4f4; }
  .bar h2 { flex: 1; padding-left: 17px; }
  .comments { position: absolute; bottom: 6px; left: 5px; width: 374px; }
  .comments h2 { padding-left: 29px; }
  .tree { display: flex; flex-direction: column; gap: 5px; padding-top: 6px; }
  .row { display: flex; height: 25px; padding-left: 32px; }
  .root { padding-left: 10px; }
  .leaf { padding-left: 90px; }
  .chevron { width: 36px; }
  .root .chevron { width: 35px; }
  .entry { display: flex; background: #f4f4f4; }
  .cell { display: flex; align-items: center; box-sizing: border-box; width: 31px; padding-left: 4px; }
  .cell input { width: 17px; height: 17px; margin: 0; accent-color: #4c4c4c; }
  .name { padding: 0 13px 0 11px; line-height: 24px; }
  .root .name { font-weight: 600; }
  .picked { background: #d9d9d9; }
  .current { background: #e8e8e8; }

  .navbar { position: absolute; bottom: 8px; left: 50%; display: flex; height: 30px; transform: translateX(-50%); background: #f4f4f4; }
  .navbar button { width: 33px; gap: 3px; }
  .navbar .has-menu { width: 41px; }
  .navbar .active { background: #dfeef6; }

  .timeline { display: flex; height: 62px; padding: 0 15px 0 11px; background: #f5f5f5; }
  .playback { display: flex; align-items: center; gap: 11px; width: 167px; }
  .features { display: flex; flex: 1; padding-top: 15px; }
  .features li { position: relative; display: flex; flex-direction: column; width: 30px; height: 37px; }
  .features li:not(.marker)::before { content: ""; position: absolute; top: 28px; left: 15px; width: 2px; height: 7px; background: #c4c4c4; }
  .features li:not(.marker)::after { content: ""; position: absolute; top: 35px; left: 15px; width: 30px; height: 2px; background: #c4c4c4; }
  .features li:nth-child(22)::after { width: 2px; }
  .features button { width: 29px; height: 29px; border-radius: 2px; }
  .features .marked { background: #f7d49f; }
  .features .marker { width: 15px; margin: -3px 0 0 -8px; }
  .marker svg { width: 15px; height: 40px; }
  .settings { width: 20px; }
  .edge { height: 6px; border-top: 1px solid #bbb; background: #eee; }
</style>
